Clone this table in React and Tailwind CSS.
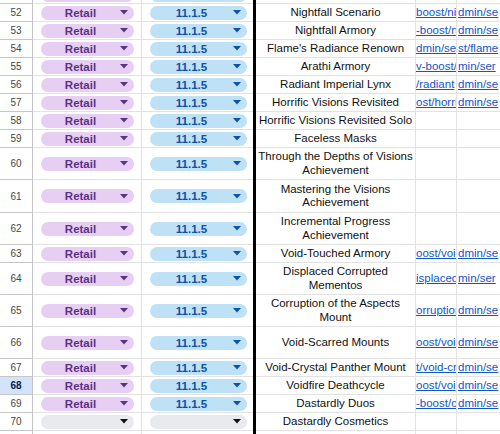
import React from 'react';

const rows = [
	{ n: 51, h: 18, name: '', d: '', e: '', hidden: true },
	{ n: 52, h: 18, name: 'Nightfall Scenario', d: 'boost/ni', e: 'dmin/se' },
	{ n: 53, h: 18, name: 'Nightfall Armory', d: '-boost/n', e: 'dmin/se' },
	{ n: 54, h: 18, name: "Flame's Radiance Renown", d: 'dmin/se', e: 'st/flame' },
	{ n: 55, h: 18, name: 'Arathi Armory', d: 'v-boost/', e: 'min/ser' },
	{ n: 56, h: 18, name: 'Radiant Imperial Lynx', d: '/radiant', e: 'dmin/se' },
	{ n: 57, h: 18, name: 'Horrific Visions Revisited', d: 'ost/horrif', e: 'dmin/se' },
	{ n: 58, h: 18, name: 'Horrific Visions Revisited Solo', d: '', e: '' },
	{ n: 59, h: 18, name: 'Faceless Masks', d: '', e: '' },
	{ n: 60, h: 32, name: ['Through the Depths of Visions', 'Achievement'], d: '', e: '' },
	{ n: 61, h: 33, name: ['Mastering the Visions', 'Achievement'], d: '', e: '' },
	{ n: 62, h: 32, name: ['Incremental Progress', 'Achievement'], d: '', e: '' },
	{ n: 63, h: 18, name: 'Void-Touched Armory', d: 'oost/void', e: 'dmin/se' },
	{ n: 64, h: 32, name: ['Displaced Corrupted', 'Mementos'], d: 'isplaced', e: 'min/ser' },
	{ n: 65, h: 32, name: ['Corruption of the Aspects', 'Mount'], d: 'orruption', e: 'dmin/se' },
	{ n: 66, h: 32, name: 'Void-Scarred Mounts', d: 'oost/void', e: 'dmin/se' },
	{ n: 67, h: 18, name: 'Void-Crystal Panther Mount', d: 't/void-cr', e: 'dmin/se' },
	{ n: 68, h: 18, name: 'Voidfire Deathcycle', d: 'oost/voi', e: 'dmin/se', active: true },
	{ n: 69, h: 18, name: 'Dastardly Duos', d: '-boost/c', e: 'dmin/se' },
	{ n: 70, h: 18, name: 'Dastardly Cosmetics', d: '', e: '', empty: true },
	{ n: 71, h: 18, name: '', d: '', e: '', blank: true },
];

const heights = {
	18: 'h-[18px]',
	32: 'h-[32px]',
	33: 'h-[33px]',
};

const Arrow = ({ color }) => (
	<svg width="8" height="5" viewBox="0 0 8 5" className="shrink-0">
		<path d="M0 0 L8 0 L4 4.5 Z" fill={color} />
	</svg>
);

const Chip = ({ label, bg, text, arrow, width }) => (
	<div className={`ml-[8px] flex h-[14px] items-center rounded-full pr-[6px] ${bg} ${width}`}>
		<span className={`flex-1 text-center text-[11.5px] font-bold leading-[14px] ${text}`}>{label}</span>
		<Arrow color={arrow} />
	</div>
);

const Row = ({ r, first }) => {
	return (
		<div className={`flex ${heights[r.h]} ${first ? '-mt-[14px]' : ''}`}>
			<div
				className={`flex w-[33px] shrink-0 items-center justify-center border-b border-r border-[#c4c7c5] text-[10px] ${
					r.active ? 'bg-[#d3e3fd] font-bold text-[#041e49]' : 'bg-white text-[#444746]'
				}`}
			>
				{!r.hidden && r.n}
			</div>
			<div className="flex w-[109px] shrink-0 items-center border-b border-r border-[#e2e2e2]">
				{!r.blank &&
					(r.empty ? (
						<Chip label="" bg="bg-[#e8eaed]" text="" arrow="#111" width="w-[93px]" />
					) : (
						<Chip
							label={r.hidden ? '' : 'Retail'}
							bg="bg-[#e6cff2]"
							text="text-[#5a3286]"
							arrow="#5a3286"
							width="w-[93px]"
						/>
					))}
			</div>
			<div className="flex w-[111px] shrink-0 items-center border-b border-[#e2e2e2]">
				{!r.blank &&
					(r.empty ? (
						<Chip label="" bg="bg-[#e8eaed]" text="" arrow="#111" width="w-[97px]" />
					) : (
						<Chip
							label={r.hidden ? '' : '11.1.5'}
							bg="bg-[#bfe1f6]"
							text="text-[#0a53a8]"
							arrow="#0a53a8"
							width="w-[97px]"
						/>
					))}
			</div>
			<div className="w-[3px] shrink-0 bg-black" />
			<div className="flex w-[160px] shrink-0 items-center justify-center border-b border-r border-[#e2e2e2] text-center text-[11.5px] leading-[13.5px] text-[#111]">
				{Array.isArray(r.name) ? (
					<span className="whitespace-nowrap">
						{r.name[0]}
						<br />
						{r.name[1]}
					</span>
				) : (
					<span className="whitespace-nowrap">{r.name}</span>
				)}
			</div>
			<div className="flex w-[41px] shrink-0 items-center overflow-hidden border-b border-r border-[#e2e2e2] whitespace-nowrap text-[11.5px] text-[#1155cc] underline">
				{r.d}
			</div>
			<div className="flex flex-1 items-center overflow-hidden border-b border-[#e2e2e2] whitespace-nowrap pl-[1px] text-[11.5px] text-[#1155cc] underline">
				{r.e}
			</div>
		</div>
	);
};

const App = () => {
	return (
		<div className="h-[434px] w-[500px] overflow-hidden bg-white font-['Liberation_Sans',Arial,sans-serif]">
			{rows.map((r, i) => (
				<Row key={r.n} r={r} first={i === 0} />
			))}
		</div>
	);
};

export default App;
